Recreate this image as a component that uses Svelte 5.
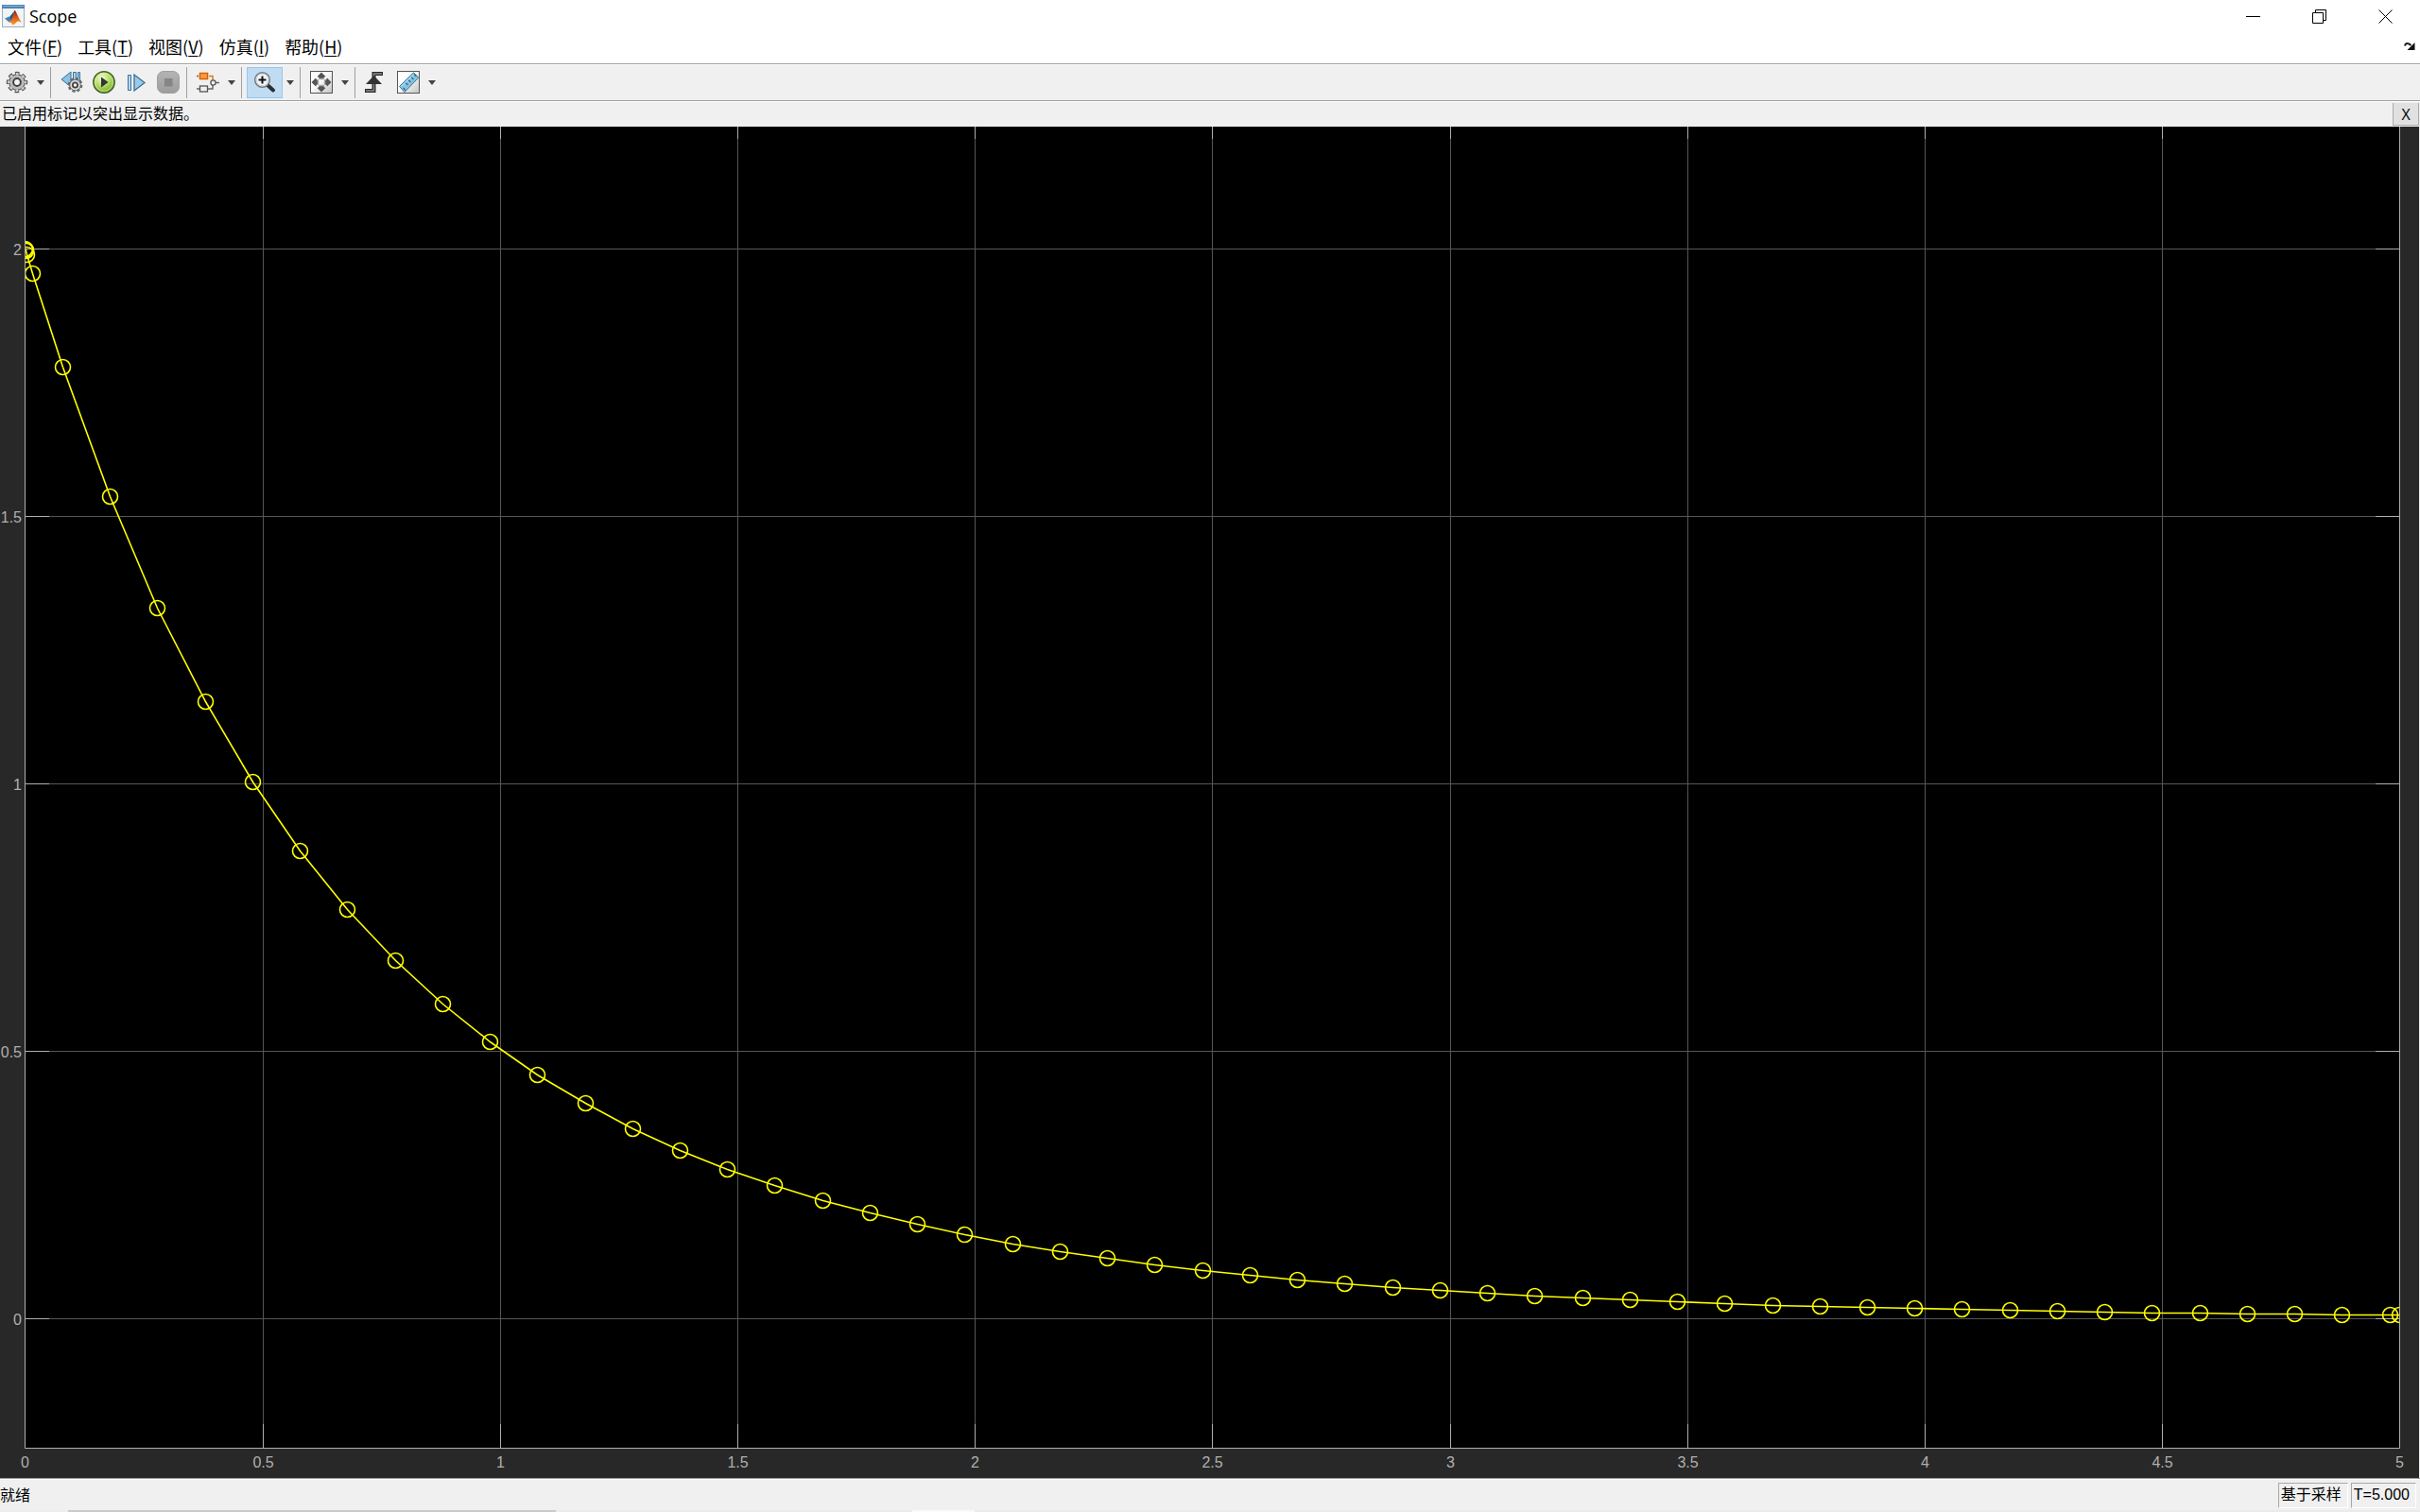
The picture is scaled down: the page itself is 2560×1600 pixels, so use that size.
<script>
  const menus = [
    { name: '文件', key: 'F' },
    { name: '工具', key: 'T' },
    { name: '视图', key: 'V' },
    { name: '仿真', key: 'I' },
    { name: '帮助', key: 'H' }
  ];

  const groups = [
    [{ id: 'gear', label: '配置属性', drop: true }],
    [
      { id: 'back', label: '步退' },
      { id: 'play', label: '运行' },
      { id: 'forward', label: '步进' },
      { id: 'stop', label: '停止' }
    ],
    [{ id: 'model', label: '突出显示模块', drop: true }],
    [{ id: 'zoom', label: '放大', drop: true, active: true }],
    [{ id: 'fit', label: '缩放坐标区', drop: true }],
    [
      { id: 'trigger', label: '触发器' },
      { id: 'ruler', label: '游标测量', drop: true }
    ]
  ];

  // Solver output: a few tiny start-up steps, then a fixed step of 0.1.
  const startup = [[0, 2], [0.0005, 1.999], [0.001, 1.998], [0.003, 1.991], [0.0155, 1.954]];
  const levels = [
    1.779, 1.537, 1.33, 1.154, 1.004, 0.875, 0.765, 0.67, 0.588, 0.518,
    0.456, 0.403, 0.355, 0.3145, 0.279, 0.249, 0.221, 0.198, 0.1765, 0.157,
    0.1396, 0.1254, 0.113, 0.1007, 0.09, 0.0813, 0.0724, 0.0654, 0.0583, 0.053,
    0.0477, 0.0424, 0.0389, 0.0353, 0.0318, 0.0283, 0.0247, 0.023, 0.0212, 0.0194,
    0.0177, 0.0159, 0.0141, 0.0124, 0.0113, 0.0106, 0.0088, 0.0088, 0.0071, 0.0071
  ];
  const samples = [...startup, ...levels.map((v, i) => [(i + 1) * 0.1 - 0.0214, v]), [5, 0.0069]];

  const xTicks = [0, 0.5, 1, 1.5, 2, 2.5, 3, 3.5, 4, 4.5, 5];
  const yTicks = [2, 1.5, 1, 0.5, 0];
  const yMax = 2.229;
  const yMin = -0.242;

  let width = $state(2559);
  let height = $state(1430);

  const left = 26;
  const right = $derived(width - 21);
  const bottom = $derived(height - 32);
  const snap = (v) => Math.floor(v) + 0.5;
  const px = (t) => snap(left + (t / 5) * (right - left) + 0.9);
  const py = (v) => snap(((yMax - v) / (yMax - yMin)) * bottom + 0.4);
  const line = $derived(samples.map(([t, v]) => `${px(t)},${py(v)}`).join(' '));
</script>

{#snippet icon(id)}
  <svg class="icon" viewBox="0 0 24 24" aria-hidden="true">
    {#if id === 'gear'}
      <g stroke="#4d4d4d" fill="none">
        <circle cx="12" cy="12" r="9.4" stroke="#555" stroke-width="3.6" stroke-dasharray="4.4 2.98" stroke-dashoffset="2.2" />
        <circle cx="12" cy="12" r="8.2" fill="#d2d2d2" stroke="#666" stroke-width="1.4" />
        <circle cx="12" cy="12" r="8.8" stroke="#cfcfcf" stroke-width="2.4" stroke-dasharray="2.8 4.11" stroke-dashoffset="1.4" />
        <circle cx="12" cy="12" r="6.2" stroke="#b4b4b4" stroke-width="1.4" />
        <circle cx="12" cy="12" r="3.9" fill="#f4f4f4" stroke="#3f3f3f" stroke-width="2" />
      </g>
    {:else if id === 'back'}
      <path d="M1 9 11 1v16z" fill="#8cc0e4" stroke="#3c6e96" />
      <path d="M13.5 1.5h3v14h-3zM18.5 1.5h2v10h-2z" fill="#a9d2ee" stroke="#3c6e96" />
      <circle cx="15.5" cy="15" r="6.6" fill="none" stroke="#666" stroke-width="2.6" stroke-dasharray="3 2.18" />
      <circle cx="15.5" cy="15" r="5.8" fill="#dcdcdc" stroke="#666" stroke-width="1" />
      <circle cx="15.5" cy="15" r="2.6" fill="#f4f4f4" stroke="#444" stroke-width="1.8" />
    {:else if id === 'play'}
      <circle cx="12" cy="12" r="11.2" fill="url(#green)" stroke="#48652a" stroke-width="1.5" />
      <circle cx="12" cy="12" r="9.4" fill="none" stroke="#e6f6b8" stroke-width="1" opacity=".7" />
      <path d="M9 6.500v11l7.500-5.500z" fill="#333" />
    {:else if id === 'forward'}
      <path d="M3.5 4.5h3v16h-3z" fill="#b5d8f0" stroke="#3c6e96" />
      <path d="M10 4v17l11-8.500z" fill="#9bcbec" stroke="#3c6e96" stroke-width="1.3" />
    {:else if id === 'stop'}
      <rect x=".5" y=".5" width="23" height="23" rx="6.500" fill="url(#grey)" stroke="#a0a0a0" />
      <path d="M8 8h8.500v8.500H8z" fill="#858585" />
    {:else if id === 'model'}
      <path d="M12 5.500h5v4.500" fill="none" stroke="#e07a20" stroke-width="1.5" />
      <path d="M0 5.500h3M0 19h3M12 19h5v-4M20 12.500h4" fill="none" stroke="#666" stroke-width="1.500" />
      <rect x="2" y="1" width="11" height="9" rx="2" fill="#ffd7a0" />
      <rect x="3.500" y="2.500" width="8" height="6" fill="#f59b45" stroke="#d0601a" stroke-width="1.300" />
      <rect x="3.500" y="16" width="8" height="6" fill="#eee" stroke="#555" stroke-width="1.300" />
      <circle cx="17.500" cy="12.500" r="2.600" fill="#eee" stroke="#555" stroke-width="1.300" />
    {:else if id === 'zoom'}
      <path d="m15.500 15.500 5.500 5" stroke="#2e2e2e" stroke-width="4" stroke-linecap="round" />
      <circle cx="9.500" cy="9.500" r="7.800" fill="#f3f7fb" stroke="#777" stroke-width="1.500" />
      <circle cx="9.500" cy="9.500" r="6.200" fill="none" stroke="#cdd3d8" />
      <path d="M9.500 5.500v8M5.500 9.500h8" stroke="#111" stroke-width="2" />
    {:else if id === 'fit'}
      <rect x=".5" y=".5" width="23" height="23" fill="url(#panel)" stroke="#555" />
      <path d="m12 1.500 4.500 4.500-2 1V9h-5V7l-2-1zM12 22.500 7.500 18l2-1v-2h5v2l2 1zM1.500 12 6 7.500l1 2h2v5H7l-1 2zM22.500 12 18 16.500l-1-2h-2v-5h2l1-2z" fill="#555" />
      <path d="M10 8.500h4M10 15.500h4M8.500 10v4M15.500 10v4" stroke="#aaa" stroke-width="1.500" />
    {:else if id === 'trigger'}
      <path d="M0 21h9.500V3H19" fill="none" stroke="#2b2b2b" stroke-width="4" />
      <path d="M1 21h8.500V3H18" fill="none" stroke="#8d8d8d" stroke-width="1.300" />
      <path d="m9.500 5 8.500 9H1z" fill="#333" />
    {:else if id === 'ruler'}
      <rect x=".5" y=".5" width="23" height="23" fill="url(#panel)" stroke="#555" />
      <path d="M2.500 16.500 17.500 1.800l5.200 5.400L8 22.500z" fill="#86c4e2" stroke="#3b7797" />
      <path d="m6.500 18 2.500 2.500M9 12.500l2.500 2.500M12 9.500l2.500 2.500M15 6.500 17.500 9M18 3.500 20.500 6" stroke="#2d6685" stroke-width="1.100" />
      <path d="m4.500 16.500 13-12.500" stroke="#c4e6f5" />
    {/if}
  </svg>
{/snippet}

<svg class="defs" aria-hidden="true">
  <defs>
    <radialGradient id="green" cx=".4" cy=".3" r=".75">
      <stop offset="0" stop-color="#f4fbd8" /><stop offset=".5" stop-color="#b4dc63" /><stop offset="1" stop-color="#6ba023" />
    </radialGradient>
    <linearGradient id="grey" x2="0" y2="1">
      <stop offset="0" stop-color="#b4b4b4" /><stop offset="1" stop-color="#9c9c9c" />
    </linearGradient>
    <linearGradient id="panel" x2="1" y2="1">
      <stop offset=".4" stop-color="#fff" /><stop offset="1" stop-color="#c4c4c4" />
    </linearGradient>
    <linearGradient id="flame" x2="0" y2="1">
      <stop offset="0" stop-color="#7d1f12" /><stop offset=".5" stop-color="#e0561c" /><stop offset="1" stop-color="#f5a02c" />
    </linearGradient>
  </defs>
</svg>

<div class="window">
  <header class="titlebar">
    <svg class="logo" viewBox="0 0 24 24" aria-hidden="true">
      <rect x=".5" y=".5" width="23" height="23" fill="#f1f3f4" stroke="#a3adb5" />
      <path d="M0 0h24v4H0z" fill="#4f83b4" />
      <path d="M1 1h22v1H1z" fill="#86b1d6" />
      <path d="M3 14.500 9 12l4-5-2 9-3.500 2.500z" fill="#3f83b8" />
      <path d="m9 12 4-5-2 9-2 .5z" fill="#27557f" />
      <path d="M13.500 5.500c2 2 4 9 7.500 13.500-3-2-4.500-2-6 0-1.200 1.500-2.500 2.500-4 2-.5-1.500-1.500-2.500-3.500-2.500 3-2 4-6 6-13z" fill="url(#flame)" />
    </svg>
    <h1>Scope</h1>
    <div class="controls">
      <button aria-label="最小化"><svg viewBox="0 0 15 15"><path d="M0 7.500h15" /></svg></button>
      <button aria-label="还原"><svg viewBox="0 0 15 15"><path d="M.5 3.500h11v11H.5zM3.500 3V.5h11v11H12" /></svg></button>
      <button aria-label="关闭"><svg viewBox="0 0 15 15"><path d="m.5.5 14 14M14.500.5l-14 14" /></svg></button>
    </div>
  </header>

  <nav class="menubar">
    {#each menus as m}
      <button>{m.name}(<u>{m.key}</u>)</button>
    {/each}
    <button class="dock" aria-label="停靠">
      <svg viewBox="0 0 12 10"><path d="M1 4.500C1.500 1.500 4.500.8 7.500 4" fill="none" stroke="#222" stroke-width="2" /><path d="M11.500 1v8H3.500z" fill="#111" /></svg>
    </button>
  </nav>

  <div class="toolbar" role="toolbar" aria-label="工具栏">
    {#each groups as group}
      <div class="group">
        {#each group as tool}
          <button class="tool" class:active={tool.active} aria-label={tool.label}>{@render icon(tool.id)}</button>
          {#if tool.drop}
            <button class="drop" aria-label="{tool.label}选项">
              <svg viewBox="0 0 8 5"><path d="M0 0h8L4 5z" fill="#444" /></svg>
            </button>
          {/if}
        {/each}
      </div>
    {/each}
  </div>

  <div class="message">
    <span>已启用标记以突出显示数据。</span>
    <button class="dismiss" aria-label="关闭消息">X</button>
  </div>

  <main class="scope" bind:clientWidth={width} bind:clientHeight={height}>
    <svg class="plot" {width} {height} role="img" aria-label="示波器曲线">
      <defs>
        <clipPath id="area"><rect x={left + 1} y="0" width={right - left - 1} height={bottom} /></clipPath>
      </defs>
      <rect x={left} y="0" width={right - left} height={bottom} fill="#000" />
      {#each xTicks.slice(1, -1) as t}
        <path class="grid" d="M{px(t)} 0V{bottom}" />
        <path class="axis" d="M{px(t)} 0v13M{px(t)} {bottom}v-25" />
      {/each}
      {#each yTicks as v}
        <path class="grid" d="M{left} {py(v)}H{right}" />
        <path class="axis" d="M{left} {py(v)}h26M{right} {py(v)}h-25" />
        <text x={left - 3} y={py(v) + 6} text-anchor="end">{v}</text>
      {/each}
      {#each xTicks as t}
        <text x={px(t)} y={bottom + 21} text-anchor="middle">{t}</text>
      {/each}
      <path class="axis" d="M{left + 0.5} 0V{bottom + 0.5}H{right + 0.5}V0" />
      <g class="signal" clip-path="url(#area)">
        <polyline points={line} />
        {#each samples as [t, v]}
          <circle cx={px(t)} cy={py(v)} r="8" />
        {/each}
      </g>
    </svg>
  </main>

  <footer class="status">
    <span class="ready">就绪</span>
    <span class="cell">基于采样</span>
    <span class="cell time">T=5.000</span>
  </footer>
  <div class="edge"></div>
</div>

<style>
  :global(body) {
    background: #f0f0f0;
  }
  .defs {
    position: absolute;
    width: 0;
    height: 0;
  }
  .window {
    display: flex;
    flex-direction: column;
    height: 100vh;
    color: #000;
    font: 16px/24px "Liberation Sans", "Noto Sans CJK SC", sans-serif;
  }
  button {
    display: flex;
    align-items: center;
    justify-content: center;
    margin: 0;
    padding: 0;
    border: 0;
    background: none;
    color: inherit;
    font: inherit;
  }
  .titlebar {
    display: flex;
    align-items: center;
    height: 34px;
    padding: 0 2px;
    background: #fff;
  }
  .logo {
    width: 24px;
    height: 24px;
  }
  h1 {
    flex: 1;
    margin: 0 0 0 5px;
    font: 18px/24px "Open Sans", sans-serif;
  }
  .controls {
    display: flex;
    height: 100%;
  }
  .controls button {
    width: 70px;
  }
  .controls svg {
    width: 15px;
    height: 15px;
    fill: none;
    stroke: #000;
  }
  .menubar {
    display: flex;
    gap: 16px;
    height: 33px;
    padding: 0 5px 3px 8px;
    box-sizing: border-box;
    background: #fff;
    font: 18px/30px "Noto Sans CJK SC", sans-serif;
  }
  u {
    text-underline-offset: 2px;
    text-decoration-thickness: 1px;
  }
  .dock {
    margin-left: auto;
  }
  .dock svg {
    width: 12px;
    height: 10px;
  }
  .toolbar {
    display: flex;
    align-items: center;
    height: 40px;
    box-sizing: border-box;
    border-top: 1px solid #a0a0a0;
    border-bottom: 1px solid #a0a0a0;
    box-shadow: inset 0 1px #fff, 0 1px #fff;
  }
  .group {
    display: flex;
    align-items: center;
    height: 33px;
    padding: 0 2px 0 5px;
    border-left: 1px solid #a0a0a0;
  }
  .group:first-child {
    padding-left: 1px;
    border-left: 0;
  }
  .tool {
    width: 34px;
    height: 33px;
  }
  .tool.active {
    width: 38px;
    border: 1px solid #90c8f6;
    background: #c0dcf3;
  }
  .icon {
    width: 24px;
    height: 24px;
  }
  .drop {
    width: 16px;
    height: 33px;
  }
  .drop svg {
    width: 8px;
    height: 5px;
  }
  .message {
    display: flex;
    align-items: center;
    justify-content: space-between;
    height: 27px;
    padding: 1px 1px 0 2px;
    box-sizing: border-box;
  }
  .dismiss {
    width: 28px;
    height: 24px;
    border: 1px solid #ababab;
    border-top: 0;
    background: #e1e1e1;
    font: 16px/20px "Open Sans", sans-serif;
  }
  .scope {
    flex: 1;
    min-height: 0;
    margin-right: 1px;
    overflow: hidden;
    background: #282828;
  }
  .plot {
    display: block;
  }
  .plot text {
    fill: #afafaf;
    font: 16px "Liberation Sans", sans-serif;
  }
  .grid {
    fill: none;
    stroke: #565656;
  }
  .axis {
    fill: none;
    stroke: #afafaf;
  }
  .signal {
    fill: none;
    stroke: #ff0;
    stroke-width: 1.6;
  }
  .status {
    display: flex;
    align-items: center;
    gap: 3px;
    height: 34px;
    padding: 2px 4px 0 0;
    box-sizing: border-box;
    border-top: 1px solid #a0a0a0;
    box-shadow: inset 0 1px #fff;
  }
  .ready {
    flex: 1;
  }
  .cell {
    height: 25px;
    padding: 0 6px 0 2px;
    border: 1px solid;
    border-color: #a8a8a8 #fff #fff #a8a8a8;
  }
  .edge {
    height: 2px;
    background: linear-gradient(90deg, #eee 72px, #cacaca 72px 588px, #ebebeb 588px 965px, #fafafa 965px 1031px, #ebebeb 1031px);
  }
</style>
